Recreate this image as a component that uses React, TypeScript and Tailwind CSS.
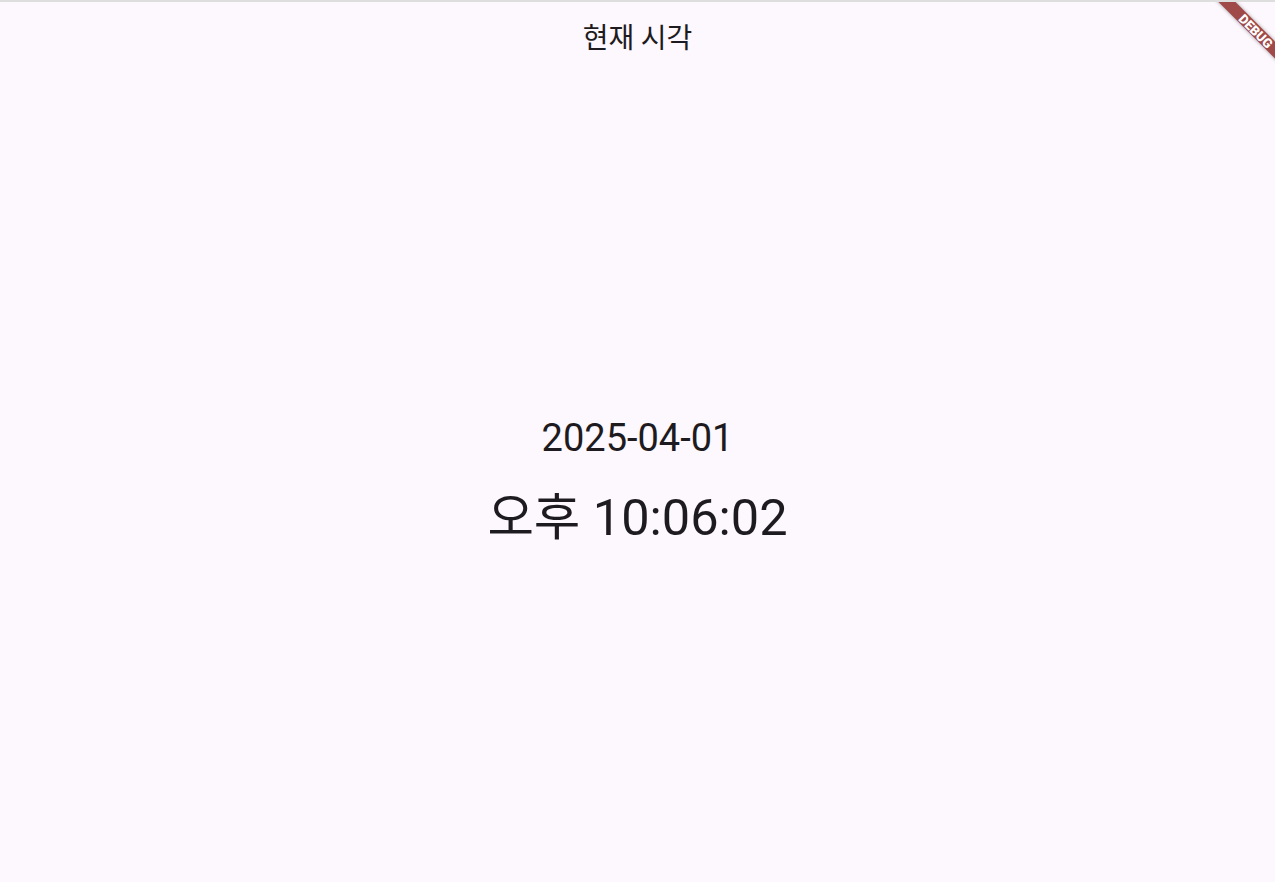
function DebugBanner() {
  return (
    <div className="pointer-events-none absolute right-[-31px] top-[23px] flex h-[12px] w-[100px] rotate-45 items-center justify-center bg-[#9f4949] shadow-[0_0_4px_rgba(0,0,0,0.35)]">
      <span className="text-[13px] font-black leading-none text-white [font-family:Roboto,'Liberation_Sans',sans-serif]">
        DEBUG
      </span>
    </div>
  );
}

export default function App() {
  return (
    <div className="relative flex h-[882px] w-full flex-col overflow-hidden border-t-2 border-[#dedede] bg-[#fdf7fe] text-[#1d1b20] [font-family:Roboto,'Noto_Sans_CJK_KR',sans-serif]">
      <header className="flex h-[64px] shrink-0 items-center justify-center pt-[4px]">
        <h1 className="text-[28px] leading-[34px] [font-family:'Noto_Sans_CJK_KR',sans-serif]">현재 시각</h1>
      </header>
      <main className="flex flex-1 flex-col items-center justify-center gap-[22px] pt-[14px]">
        <div className="text-[38px] leading-[46px]">2025-04-01</div>
        <div className="text-[50.5px] leading-[60px]">
          <span className="[font-family:'Noto_Sans_CJK_KR',sans-serif]">오후</span> 10:06:02
        </div>
      </main>
      <DebugBanner />
    </div>
  );
}
